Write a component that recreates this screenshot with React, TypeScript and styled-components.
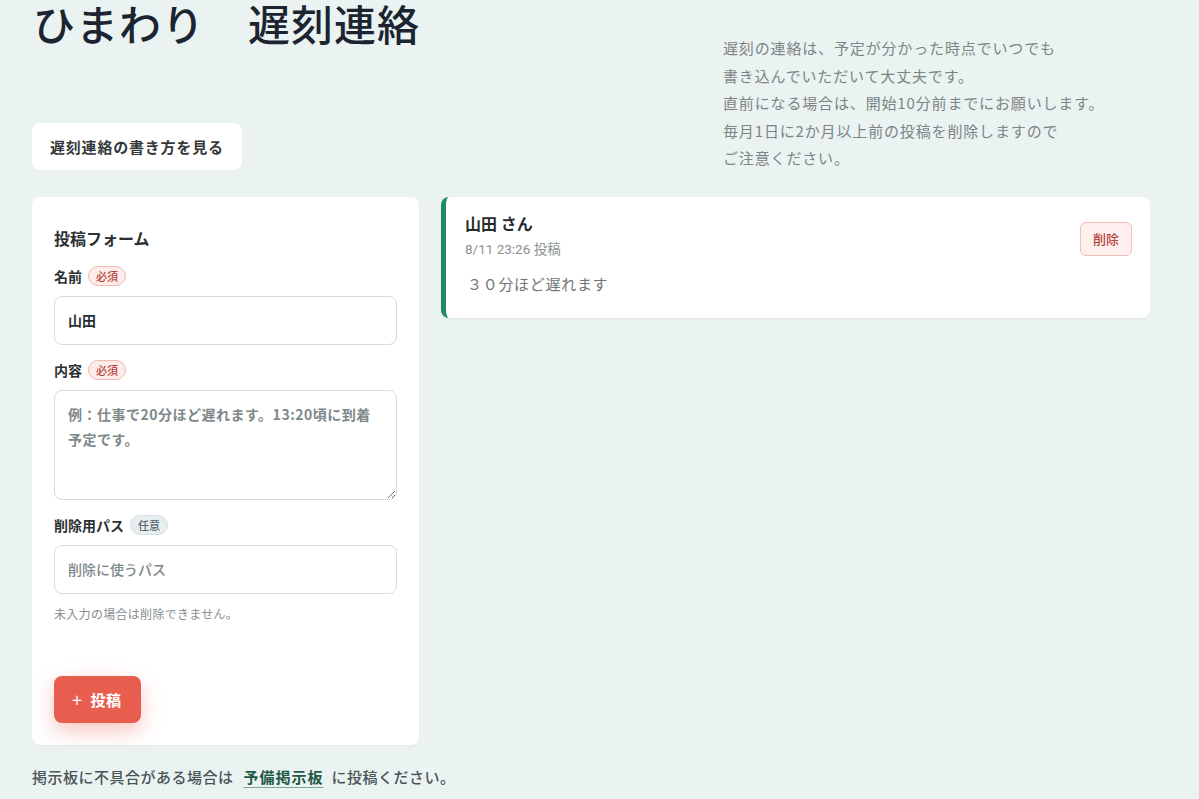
import React, { useState } from "react"
import styled, { createGlobalStyle } from "styled-components"

const GlobalStyle = createGlobalStyle`
    html, body {
        margin: 0;
        padding: 0;
        background: #eaf3f1;
    }
    body {
        font-family: "Noto Sans CJK JP", "Noto Sans", sans-serif;
        color: #2b3033;
    }
    * { box-sizing: border-box; }
`

const Page = styled.div`
    width: 1120px;
    margin-left: 32px;
    padding-bottom: 20px;
`

const Header = styled.header`
    display: flex;
    justify-content: space-between;
    align-items: flex-start;
`

const HeaderLeft = styled.div`
    display: flex;
    flex-direction: column;
    align-items: flex-start;
`

const Title = styled.h1`
    margin: 0 0 0 1px;
    font-size: 42px;
    font-weight: 500;
    line-height: 46px;
    color: #1b2430;
    letter-spacing: 1px;
`

const GuideButton = styled.button`
    margin-top: 77px;
    height: 47px;
    padding: 0 18px;
    border: none;
    border-radius: 8px;
    background: #fff;
    font-family: inherit;
    font-size: 15px;
    font-weight: 700;
    letter-spacing: 0.8px;
    color: #33383b;
    cursor: pointer;
`

const Notice = styled.p`
    width: 429px;
    margin: 34px 0 0;
    font-size: 15px;
    line-height: 27.5px;
    color: #7c8486;
    letter-spacing: 0.85px;
`

const Main = styled.main`
    display: grid;
    grid-template-columns: 387px 709px;
    gap: 22px;
    margin-top: 25px;
    align-items: start;
`

const FormCard = styled.section`
    background: #fff;
    border-radius: 8px;
    padding: 29px 22px 22px;
    height: 548px;
    display: flex;
    flex-direction: column;
    box-shadow: 0 1px 2px rgba(0, 0, 0, 0.04);
`

const FormTitle = styled.h2`
    margin: 0 0 16px;
    font-size: 16px;
    font-weight: 700;
    color: #2b3033;
`

const Field = styled.div`
    display: flex;
    flex-direction: column;
    margin-bottom: 15px;
`

const Label = styled.label`
    display: flex;
    align-items: center;
    gap: 6px;
    font-size: 14px;
    font-weight: 700;
    color: #2b3033;
    margin-bottom: 10px;
`

const Badge = styled.span<{ $required?: boolean }>`
    display: inline-flex;
    align-items: center;
    height: 20px;
    padding: 0 7px;
    border-radius: 10px;
    font-size: 11px;
    font-weight: 500;
    background: ${p => (p.$required ? "#fdecea" : "#e6eef0")};
    border: 1px solid ${p => (p.$required ? "#f4b9b1" : "#d6e0e3")};
    color: ${p => (p.$required ? "#b4453b" : "#56636a")};
`

const TextInput = styled.input`
    height: 49px;
    padding: 0 13px;
    border: 1px solid #d3dcdf;
    border-radius: 8px;
    font-family: inherit;
    font-size: 14px;
    font-weight: 700;
    color: #2b3033;
    outline: none;
    &::placeholder {
        color: #7e8789;
        font-weight: 500;
    }
`

const TextArea = styled.textarea`
    height: 110px;
    padding: 11px 13px;
    border: 1px solid #d3dcdf;
    border-radius: 8px;
    font-family: inherit;
    font-size: 14px;
    line-height: 25px;
    letter-spacing: 0.5px;
    resize: vertical;
    outline: none;
    &::placeholder {
        color: #7e8789;
        font-weight: 700;
    }
`

const Help = styled.p`
    margin: -4px 0 0;
    font-size: 12px;
    color: #868d90;
    letter-spacing: 0.3px;
`

const SubmitButton = styled.button`
    margin-top: auto;
    align-self: flex-start;
    height: 47px;
    padding: 0 19px 0 18px;
    border: none;
    border-radius: 8px;
    background: #e85e4e;
    color: #fff;
    font-family: inherit;
    font-size: 15px;
    font-weight: 700;
    letter-spacing: 0.5px;
    display: flex;
    align-items: center;
    gap: 8px;
    box-shadow: 0 8px 20px rgba(232, 94, 78, 0.35);
    cursor: pointer;
`

const Plus = styled.span`
    font-size: 18px;
    font-weight: 400;
    line-height: 1;
`

const PostCard = styled.article`
    background: #fff;
    border-radius: 8px;
    border-left: 5px solid #1e8a6a;
    padding: 14px 18px 24px 19px;
    display: flex;
    justify-content: space-between;
    align-items: flex-start;
    box-shadow: 0 1px 2px rgba(0, 0, 0, 0.05);
`

const PostBody = styled.div`
    display: flex;
    flex-direction: column;
`

const PostName = styled.h3`
    margin: 0;
    font-size: 16px;
    font-weight: 700;
    line-height: 24px;
    color: #262b2e;
`

const PostMeta = styled.span`
    margin-top: 3px;
    font-size: 13.5px;
    color: #8b9193;
    font-family: "Roboto", "Noto Sans CJK JP", sans-serif;
`

const PostText = styled.p`
    margin: 15px 0 0 2px;
    font-size: 15px;
    color: #6f7679;
    letter-spacing: 0.7px;
`

const DeleteButton = styled.button`
    margin-top: 11px;
    height: 34px;
    padding: 0 12px;
    border: 1px solid #f3bdb5;
    border-radius: 6px;
    background: #fdf0ee;
    color: #b4443a;
    font-family: inherit;
    font-size: 13px;
    font-weight: 500;
    cursor: pointer;
`

const Footer = styled.footer`
    margin-top: 21px;
    font-size: 15px;
    font-weight: 500;
    color: #4a5356;
    letter-spacing: 0.5px;
`

const Link = styled.a`
    margin: 0 8px 0 10px;
    color: #1f5a46;
    font-weight: 700;
    letter-spacing: 1px;
    text-decoration: underline;
    text-underline-offset: 4px;
    text-decoration-color: #7aa596;
`

type Post = {
    name: string
    date: string
    text: string
}

const posts: Post[] = [
    { name: "山田", date: "8/11 23:26", text: "３０分ほど遅れます" },
]

export default function App() {
    const [name, setName] = useState("山田")
    const [content, setContent] = useState("")
    const [pass, setPass] = useState("")

    return (
        <Page>
            <GlobalStyle />
            <Header>
                <HeaderLeft>
                    <Title>ひまわり　遅刻連絡</Title>
                    <GuideButton>遅刻連絡の書き方を見る</GuideButton>
                </HeaderLeft>
                <Notice>
                    遅刻の連絡は、予定が分かった時点でいつでも<br />
                    書き込んでいただいて大丈夫です。<br />
                    直前になる場合は、開始10分前までにお願いします。<br />
                    毎月1日に2か月以上前の投稿を削除しますので<br />
                    ご注意ください。
                </Notice>
            </Header>
            <Main>
                <FormCard>
                    <FormTitle>投稿フォーム</FormTitle>
                    <Field>
                        <Label>名前 <Badge $required>必須</Badge></Label>
                        <TextInput value={name} onChange={e => setName(e.target.value)} />
                    </Field>
                    <Field>
                        <Label>内容 <Badge $required>必須</Badge></Label>
                        <TextArea
                            value={content}
                            onChange={e => setContent(e.target.value)}
                            placeholder="例：仕事で20分ほど遅れます。13:20頃に到着予定です。"
                        />
                    </Field>
                    <Field>
                        <Label>削除用パス <Badge>任意</Badge></Label>
                        <TextInput
                            value={pass}
                            onChange={e => setPass(e.target.value)}
                            placeholder="削除に使うパス"
                        />
                    </Field>
                    <Help>未入力の場合は削除できません。</Help>
                    <SubmitButton><Plus>+</Plus>投稿</SubmitButton>
                </FormCard>
                <div>
                    {posts.map((p, i) => (
                        <PostCard key={i}>
                            <PostBody>
                                <PostName>{p.name} さん</PostName>
                                <PostMeta>{p.date} 投稿</PostMeta>
                                <PostText>{p.text}</PostText>
                            </PostBody>
                            <DeleteButton>削除</DeleteButton>
                        </PostCard>
                    ))}
                </div>
            </Main>
            <Footer>
                掲示板に不具合がある場合は<Link href="#">予備掲示板</Link>に投稿ください。
            </Footer>
        </Page>
    )
}
